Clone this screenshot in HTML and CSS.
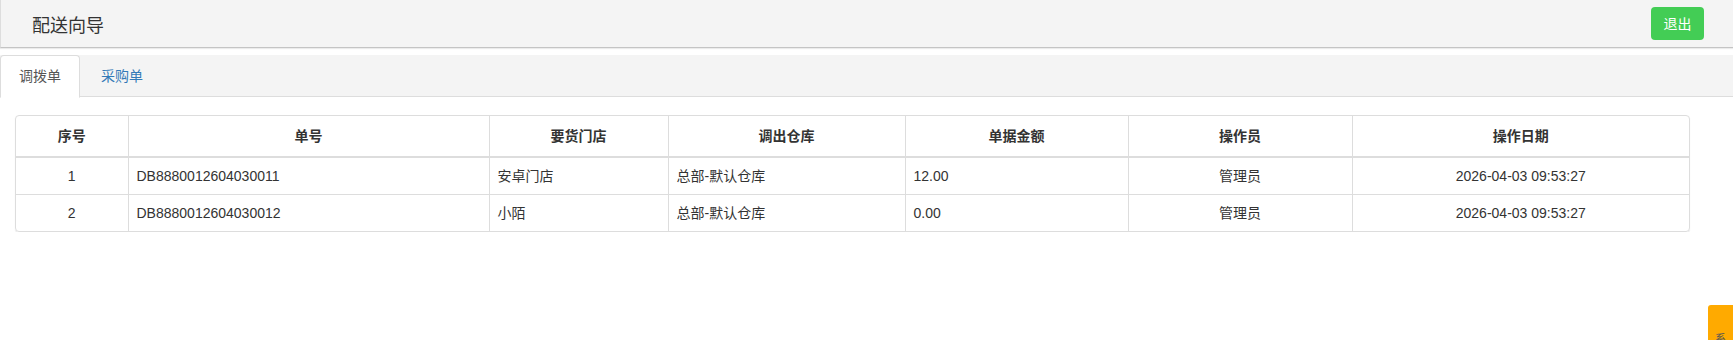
FILE: index.html
```html
<!DOCTYPE html>
<html lang="zh-CN">
<head>
<meta charset="UTF-8" />
<meta name="viewport" content="width=device-width, initial-scale=1" />
<title>配送向导</title>
<link rel="stylesheet" href="styles.css">
</head>
<body>

<div class="topbar">
  <span class="title">配送向导</span>
  <button class="logout-btn">退出</button>
</div>

<ul class="tabs">
  <li class="tab active">调拨单</li>
  <li class="tab">采购单</li>
</ul>

<div class="content">
  <div class="panel">
    <table class="grid">
      <thead>
        <tr>
          <th class="col-no">序号</th>
          <th class="col-code">单号</th>
          <th class="col-store">要货门店</th>
          <th class="col-wh">调出仓库</th>
          <th class="col-amount">单据金额</th>
          <th class="col-op">操作员</th>
          <th class="col-date">操作日期</th>
        </tr>
      </thead>
      <tbody>
        <tr>
          <td class="center">1</td>
          <td>DB8880012604030011</td>
          <td>安卓门店</td>
          <td>总部-默认仓库</td>
          <td>12.00</td>
          <td class="center">管理员</td>
          <td class="center">2026-04-03 09:53:27</td>
        </tr>
        <tr>
          <td class="center">2</td>
          <td>DB8880012604030012</td>
          <td>小陌</td>
          <td>总部-默认仓库</td>
          <td>0.00</td>
          <td class="center">管理员</td>
          <td class="center">2026-04-03 09:53:27</td>
        </tr>
      </tbody>
    </table>
  </div>
</div>

<div class="side-tag">系</div>

</body>
</html>
```

FILE: styles.css
```css
body {
  margin: 0;
  font-family: "Liberation Sans", "Noto Sans CJK SC", sans-serif;
  font-size: 14px;
  color: #333;
  background: #fff;
}

.topbar {
  display: flex;
  align-items: center;
  justify-content: space-between;
  height: 47px;
  padding: 0 29px 0 31px;
  background: #f4f4f4;
  border-left: 1px solid #ddd;
  border-bottom: 1px solid #c4c4c4;
  box-shadow: 0 1px 1px rgba(0, 0, 0, 0.08);
}

.title {
  font-size: 18px;
  color: #333;
}

.logout-btn {
  width: 53px;
  height: 33px;
  padding: 0;
  margin-top: -1px;
  background: #43cd55;
  color: #fff;
  border: none;
  border-radius: 4px;
  font-family: inherit;
  font-size: 14px;
  cursor: pointer;
}

.tabs {
  display: flex;
  list-style: none;
  margin: 7px 0 0;
  padding: 0;
  height: 41px;
  background: #f4f4f4;
  border-bottom: 1px solid #ddd;
}

.tab {
  margin-right: 2px;
  padding: 10px 18px;
  line-height: 20px;
  color: #337ab7;
  border: 1px solid transparent;
  border-radius: 4px 4px 0 0;
  cursor: pointer;
}

.tab.active {
  color: #555;
  background: #fff;
  border-color: #ddd;
  border-bottom-color: transparent;
  height: 21px;
}

.content {
  padding: 18px 43px 0 15px;
}

.panel {
  border: 1px solid #ddd;
  border-radius: 4px;
  box-shadow: 0 1px 1px rgba(0, 0, 0, 0.1);
  overflow: hidden;
}

.grid {
  width: 100%;
  border-collapse: collapse;
  table-layout: fixed;
}

.grid th,
.grid td {
  box-sizing: border-box;
  border-left: 1px solid #ddd;
  line-height: 20px;
  text-align: left;
}

.grid th:first-child,
.grid td:first-child {
  border-left: none;
}

.grid th {
  padding: 10px 8px;
  text-align: center;
  font-weight: bold;
  border-bottom: 2px solid #ddd;
}

.grid td {
  padding: 8px;
  border-top: 1px solid #ddd;
}

.grid tbody tr:first-child td {
  border-top: none;
}

.grid td.center {
  text-align: center;
}

.col-no { width: 112px; }
.col-code { width: 361px; }
.col-store { width: 179px; }
.col-wh { width: 237px; }
.col-amount { width: 223px; }
.col-op { width: 224px; }

.side-tag {
  position: fixed;
  right: 0;
  bottom: -6px;
  width: 25px;
  height: 41px;
  background: #ffaa00;
  border-radius: 3px 0 0 0;
  font-size: 11px;
  color: #555;
  display: flex;
  align-items: flex-end;
  justify-content: center;
}
```
